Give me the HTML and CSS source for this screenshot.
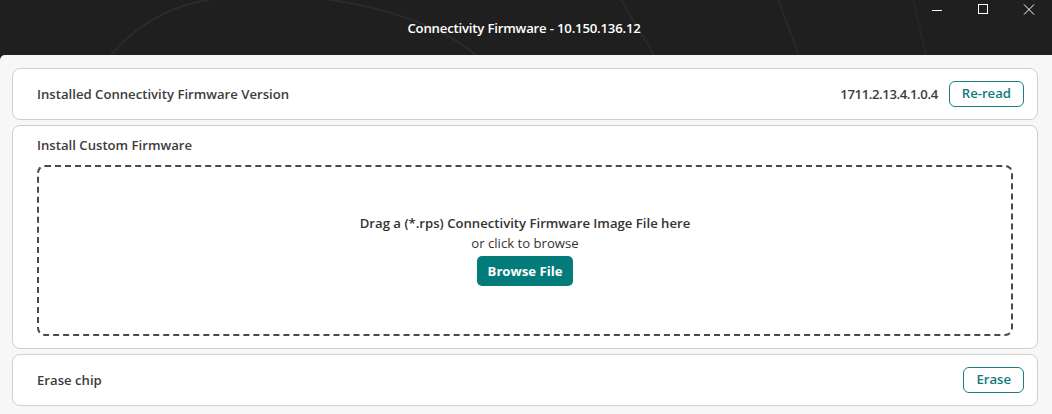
FILE: index.html
```html
<!DOCTYPE html>
<html lang="en">
<head>
<meta charset="utf-8">
<title>Connectivity Firmware</title>
<link rel="stylesheet" href="styles.css">
</head>
<body>
<div class="window">
  <header class="titlebar">
    <svg class="titlebar-art" width="1052" height="55" viewBox="0 0 1052 55" aria-hidden="true">
      <path d="M111 55 C140 20 180 2 221 -2" fill="none" stroke="#2b2b2b" stroke-width="2"/>
      <path d="M315 -2 C380 5 440 25 476 55" fill="none" stroke="#2b2b2b" stroke-width="2"/>
      <path d="M621 0 L654 55" fill="none" stroke="#282828" stroke-width="2"/>
      <path d="M778 0 L799 55" fill="none" stroke="#282828" stroke-width="2"/>
      <path d="M913 0 L926 55" fill="none" stroke="#262626" stroke-width="2"/>
    </svg>
    <div class="title-spacer"></div>
    <div class="title">Connectivity Firmware - 10.150.136.12</div>
    <div class="controls">
      <svg class="ctl" width="14" height="14" viewBox="0 0 14 14"><path d="M2 7.5 H12" stroke="#fff" stroke-width="1"/></svg>
      <svg class="ctl" width="14" height="14" viewBox="0 0 14 14"><rect x="2.5" y="1.5" width="9" height="9" fill="none" stroke="#fff" stroke-width="1"/></svg>
      <svg class="ctl" width="14" height="14" viewBox="0 0 14 14"><path d="M2 1.5 L12 11.5 M12 1.5 L2 11.5" stroke="#fff" stroke-width="1"/></svg>
    </div>
  </header>
  <main class="content">
    <section class="card row-card">
      <span class="label">Installed Connectivity Firmware Version</span>
      <div class="row-actions">
        <span class="version">1711.2.13.4.1.0.4</span>
        <button class="btn-outline">Re-read</button>
      </div>
    </section>
    <section class="card install-card">
      <div class="label">Install Custom Firmware</div>
      <div class="dropzone">
        <div class="drop-main">Drag a (*.rps) Connectivity Firmware Image File here</div>
        <div class="drop-sub">or click to browse</div>
        <button class="btn-fill">Browse File</button>
      </div>
    </section>
    <section class="card row-card">
      <span class="label">Erase chip</span>
      <button class="btn-outline">Erase</button>
    </section>
  </main>
</div>
</body>
</html>
```

FILE: styles.css
```css
* { box-sizing: border-box; }
html, body { margin: 0; padding: 0; }
body {
  width: 1052px;
  height: 414px;
  overflow: hidden;
  background: #1f1f1f;
  font-family: "Open Sans", "Noto Sans", sans-serif;
  font-size: 13.15px;
  color: #3a3a3a;
}
.window { display: flex; flex-direction: column; height: 414px; }
.titlebar {
  position: relative;
  height: 55px;
  background: #1f1f1f;
  display: grid;
  grid-template-columns: 1fr auto 1fr;
  align-items: center;
  flex: none;
}
.titlebar-art { position: absolute; left: 0; top: 0; pointer-events: none; }
.title {
  position: relative;
  color: #fff;
  font-weight: 600;
  font-size: 13.2px;
  letter-spacing: -0.2px;
  padding-top: 1px;
  margin-right: 4px;
}
.controls {
  position: relative;
  justify-self: end;
  align-self: start;
  display: flex;
  gap: 32px;
  padding: 3px 16px 0 0;
}
.ctl { display: block; }
.content {
  flex: 1;
  background: #f7f7f7;
  border-top-left-radius: 5px;
  padding: 13px 14px 9px 12px;
  display: flex;
  flex-direction: column;
  gap: 5px;
}
.card {
  background: #fff;
  border: 1px solid #cfcfcf;
  border-radius: 8px;
  flex: none;
}
.row-card {
  height: 52px;
  display: flex;
  align-items: center;
  justify-content: space-between;
  padding: 0 13px 0 24px;
}
.label { font-weight: 600; color: #3c3c3c; }
.row-actions { display: flex; align-items: center; gap: 11px; }
.version { font-weight: 600; color: #3c3c3c; letter-spacing: -0.4px; }
.btn-outline {
  font-family: inherit;
  font-size: 13.15px;
  font-weight: 600;
  color: #0e7b7b;
  background: #fff;
  border: 1px solid #1b7f80;
  border-radius: 6px;
  height: 26px;
  padding: 0 12px;
  line-height: 1;
}
.install-card {
  height: 224px;
  padding: 9px 24px 12px 24px;
  display: flex;
  flex-direction: column;
  gap: 10px;
}
.install-card .label { line-height: 20px; }
.dropzone {
  flex: 1;
  border: 2px dashed #4a4a4a;
  border-radius: 8px;
  display: flex;
  flex-direction: column;
  align-items: center;
  justify-content: center;
  padding-bottom: 3px;
}
.drop-main { font-weight: 600; color: #333; line-height: 20px; }
.drop-sub { color: #333; line-height: 20px; }
.btn-fill {
  margin-top: 3px;
  font-family: inherit;
  font-size: 13.15px;
  font-weight: 700;
  color: #fff;
  background: #047b7b;
  border: none;
  border-radius: 5px;
  height: 30px;
  padding: 0 11px;
}
```
